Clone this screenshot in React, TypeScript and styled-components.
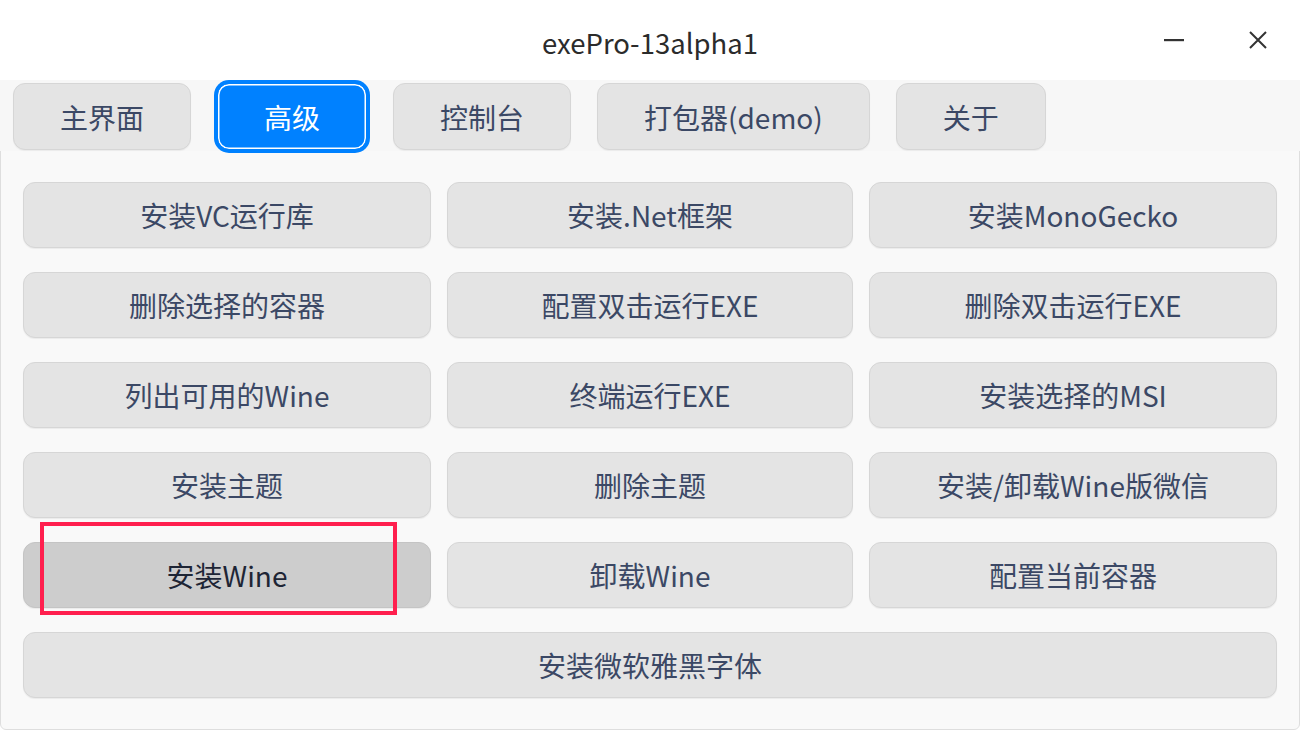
import React from "react";
import styled, { createGlobalStyle } from "styled-components";

const Global = createGlobalStyle`
  html, body { margin: 0; padding: 0; background: #ffffff; }
  body { font-family: "Noto Sans CJK SC", "Noto Sans", sans-serif; }
  * { box-sizing: border-box; }
`;

const Window = styled.div`
  width: 1300px;
  height: 730px;
  display: flex;
  flex-direction: column;
  background: #ffffff;
  position: relative;
  overflow: hidden;
`;

const TitleBar = styled.div`
  height: 80px;
  flex: none;
  display: flex;
  align-items: center;
  justify-content: center;
  position: relative;
  background: #ffffff;
`;

const Title = styled.div`
  font-size: 27.5px;
  color: #2b2b2b;
  margin-top: 3px;
`;

const Controls = styled.div`
  position: absolute;
  right: 22px;
  top: 0;
  height: 80px;
  display: flex;
  align-items: center;
  gap: 44px;
`;

const CtrlBtn = styled.div`
  width: 40px;
  height: 40px;
  display: flex;
  align-items: center;
  justify-content: center;
  color: #333;
`;

const TabBar = styled.div`
  height: 71px;
  flex: none;
  background: #f7f7f7;
  display: flex;
  align-items: flex-start;
  padding: 3px 0 0 13px;
  gap: 26px;
  position: relative;
  z-index: 1;
`;

const Tab = styled.button<{ $active?: boolean }>`
  height: 67px;
  padding: 0 46px;
  border-radius: 12px;
  font-family: "Noto Sans CJK SC", "Noto Sans", sans-serif;
  font-size: 28px;
  display: flex;
  align-items: center;
  justify-content: center;
  cursor: pointer;
  white-space: nowrap;
  ${(p) =>
    p.$active
      ? `
    background: #0081ff;
    color: #ffffff;
    border: 1px solid #0081ff;
    box-shadow: inset 0 0 0 1.5px #ffffff, 0 0 0 3px #0081ff;
  `
      : `
    background: #e4e4e4;
    color: #3b4865;
    border: 1px solid #d6d6d6;
    box-shadow: 0 1px 1px rgba(0,0,0,0.05);
  `}
`;

const Panel = styled.div`
  flex: 1;
  background: #f9f9f9;
  border: 1px solid #dedede;
  border-radius: 0 0 6px 6px;
  padding: 31px 21px 0 22px;
  display: grid;
  grid-template-columns: 408px 406px 408px;
  grid-auto-rows: 66px;
  column-gap: 16px;
  row-gap: 24px;
  margin-top: -1px;
`;

const ActionButton = styled.button<{ $pressed?: boolean; $wide?: boolean }>`
  height: 66px;
  border-radius: 12px;
  border: 1px solid ${(p) => (p.$pressed ? "#c4c4c4" : "#d6d6d6")};
  background: ${(p) => (p.$pressed ? "#cdcdcd" : "#e4e4e4")};
  color: ${(p) => (p.$pressed ? "#1e2535" : "#3b4865")};
  box-shadow: 0 1px 1px rgba(0, 0, 0, 0.06);
  font-family: "Noto Sans CJK SC", "Noto Sans", sans-serif;
  font-size: 28px;
  display: flex;
  align-items: center;
  justify-content: center;
  padding: 0;
  cursor: pointer;
  grid-column: ${(p) => (p.$wide ? "1 / -1" : "auto")};
  position: relative;
`;

const Highlight = styled.div`
  position: absolute;
  left: 40px;
  top: 522px;
  width: 357px;
  height: 93px;
  border: 4px solid #ff1f4e;
  pointer-events: none;
  z-index: 5;
`;

const buttons: { label: string; pressed?: boolean; wide?: boolean }[] = [
  { label: "安装VC运行库" },
  { label: "安装.Net框架" },
  { label: "安装MonoGecko" },
  { label: "删除选择的容器" },
  { label: "配置双击运行EXE" },
  { label: "删除双击运行EXE" },
  { label: "列出可用的Wine" },
  { label: "终端运行EXE" },
  { label: "安装选择的MSI" },
  { label: "安装主题" },
  { label: "删除主题" },
  { label: "安装/卸载Wine版微信" },
  { label: "安装Wine", pressed: true },
  { label: "卸载Wine" },
  { label: "配置当前容器" },
  { label: "安装微软雅黑字体", wide: true },
];

const tabs = ["主界面", "高级", "控制台", "打包器(demo)", "关于"];

export default function App() {
  return (
    <Window>
      <Global />
      <TitleBar>
        <Title>exePro-13alpha1</Title>
        <Controls>
          <CtrlBtn>
            <svg width="22" height="4" viewBox="0 0 22 4">
              <rect x="1" y="1" width="20" height="2.2" fill="#333" />
            </svg>
          </CtrlBtn>
          <CtrlBtn>
            <svg width="18" height="18" viewBox="0 0 18 18">
              <path d="M1 1 L17 17 M17 1 L1 17" stroke="#333" strokeWidth="2" />
            </svg>
          </CtrlBtn>
        </Controls>
      </TitleBar>
      <TabBar>
        {tabs.map((t) => (
          <Tab key={t} $active={t === "高级"}>
            {t}
          </Tab>
        ))}
      </TabBar>
      <Panel>
        {buttons.map((b) => (
          <ActionButton key={b.label} $pressed={b.pressed} $wide={b.wide}>
            {b.label}
          </ActionButton>
        ))}
      </Panel>
      <Highlight />
    </Window>
  );
}
